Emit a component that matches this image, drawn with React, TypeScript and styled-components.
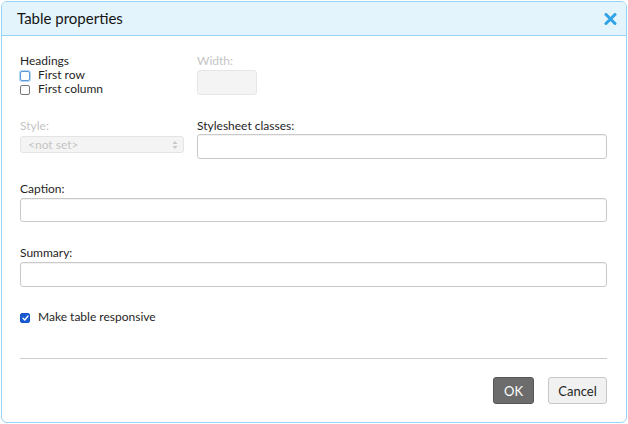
import styled, { createGlobalStyle } from 'styled-components';

const Global = createGlobalStyle`
  html, body {
    margin: 0;
    padding: 0;
    background: #ffffff;
  }
  body {
    font-family: Lato, "Open Sans", Arial, sans-serif;
    color: #1f1f1f;
  }
`;

const Dialog = styled.div`
  box-sizing: border-box;
  width: 626px;
  height: 422px;
  margin: 1px;
  border: 1px solid #96d3f4;
  border-radius: 6px;
  background: #fff;
  display: flex;
  flex-direction: column;
  overflow: hidden;
`;

const Header = styled.div`
  height: 34px;
  flex: none;
  display: flex;
  align-items: center;
  justify-content: space-between;
  padding: 0 8px 0 15px;
  background: #e3f4fd;
  border-bottom: 1px solid #96d3f4;
  box-sizing: border-box;
`;

const Title = styled.h1`
  margin: 0;
  font-size: 15px;
  font-weight: 400;
  color: #141414;
  padding-bottom: 1px;
`;

const CloseButton = styled.button`
  border: 0;
  background: none;
  padding: 0;
  width: 15px;
  height: 16px;
  display: flex;
  align-items: center;
  justify-content: center;
  cursor: pointer;
`;

const Body = styled.div`
  flex: 1;
  display: flex;
  flex-direction: column;
  padding: 17px 19px 0 18px;
`;

const Row = styled.div<{ $top?: number }>`
  display: grid;
  grid-template-columns: 164px 1fr;
  column-gap: 13px;
  margin-top: ${p => p.$top ?? 0}px;
`;

const Field = styled.div<{ $top?: number }>`
  display: flex;
  flex-direction: column;
  margin-top: ${p => p.$top ?? 0}px;
`;

const Label = styled.label<{ $disabled?: boolean; $gap?: number }>`
  font-size: 12px;
  line-height: 15px;
  color: ${p => (p.$disabled ? '#c4c4c4' : '#1f1f1f')};
  margin-bottom: ${p => p.$gap ?? 1}px;
`;

const Check = styled.label`
  display: flex;
  align-items: center;
  height: 14px;
  font-size: 12px;
  line-height: 14px;
  color: #1f1f1f;
`;

const Box = styled.span<{ $checked?: boolean; $focus?: boolean }>`
  box-sizing: border-box;
  flex: none;
  width: 10px;
  height: 10px;
  margin: 2px 8px 0 0;
  border-radius: 2px;
  border: 1px solid ${p => (p.$checked ? '#1553c7' : p.$focus ? '#5b9ad8' : '#777')};
  box-shadow: ${p => (p.$focus ? '0 0 0 1px #b7d6f3' : 'none')};
  background: ${p => (p.$checked ? '#1a5ad0' : '#fff')};
  display: flex;
  align-items: center;
  justify-content: center;
`;

const TextInput = styled.div<{ $w?: number; $h?: number; $disabled?: boolean }>`
  box-sizing: border-box;
  width: ${p => (p.$w ? `${p.$w}px` : '100%')};
  height: ${p => p.$h ?? 25}px;
  border: 1px solid ${p => (p.$disabled ? '#e6e6e6' : '#c9c9c9')};
  border-radius: 3px;
  background: ${p => (p.$disabled ? '#f4f4f4' : '#fff')};
  box-shadow: ${p => (p.$disabled ? 'none' : 'inset 0 1px 1px rgba(0,0,0,0.06)')};
`;

const Select = styled.div`
  box-sizing: border-box;
  width: 164px;
  height: 17px;
  margin-top: 2px;
  border: 1px solid #e4e4e4;
  border-radius: 3px;
  background: #f4f4f4;
  color: #c4c4c4;
  font-size: 12px;
  line-height: 15px;
  padding: 0 5px 0 7px;
  display: flex;
  align-items: center;
  justify-content: space-between;
`;

const Divider = styled.hr`
  border: 0;
  border-top: 1px solid #cccccc;
  margin: 34px 0 0;
`;

const Footer = styled.div`
  display: flex;
  justify-content: flex-end;
  gap: 14px;
  margin-top: 18px;
`;

const Button = styled.button<{ $primary?: boolean }>`
  box-sizing: border-box;
  height: 27px;
  min-width: ${p => (p.$primary ? 41 : 59)}px;
  padding: 0 9px;
  border-radius: 3px;
  font-family: inherit;
  font-size: 13px;
  border: 1px solid ${p => (p.$primary ? '#555' : '#c7c7c7')};
  background: ${p => (p.$primary ? '#6c6c6c' : '#f1f1f1')};
  color: ${p => (p.$primary ? '#fff' : '#1f1f1f')};
  cursor: pointer;
`;

const CheckMark = () => (
  <svg width="7" height="6" viewBox="0 0 7 6">
    <path d="M1 3.2 L2.8 5 L6 1" fill="none" stroke="#fff" strokeWidth="1.3" strokeLinecap="round" strokeLinejoin="round" />
  </svg>
);

const Arrows = () => (
  <svg width="6" height="10" viewBox="0 0 6 10">
    <path d="M0.5 4 L3 1 L5.5 4 Z M0.5 6 L3 9 L5.5 6 Z" fill="#c8c8c8" />
  </svg>
);

export default function App() {
  return (
    <>
      <Global />
      <Dialog>
        <Header>
          <Title>Table properties</Title>
          <CloseButton aria-label="Close">
            <svg width="13" height="12" viewBox="0 0 13 12">
              <path d="M2 1.5 L11 10.5 M11 1.5 L2 10.5" stroke="#2fa3e6" strokeWidth="3" strokeLinecap="round" />
            </svg>
          </CloseButton>
        </Header>

        <Body>
          <Row>
            <Field>
              <Label $gap={0}>Headings</Label>
              <Check>
                <Box $focus />
                First row
              </Check>
              <Check>
                <Box />
                First column
              </Check>
            </Field>
            <Field>
              <Label $disabled $gap={2}>Width:</Label>
              <TextInput $w={60} $disabled />
            </Field>
          </Row>

          <Row $top={22}>
            <Field>
              <Label $disabled>Style:</Label>
              <Select>
                <span>&lt;not set&gt;</span>
                <Arrows />
              </Select>
            </Field>
            <Field>
              <Label>Stylesheet classes:</Label>
              <TextInput />
            </Field>
          </Row>

          <Field $top={22}>
            <Label $gap={2}>Caption:</Label>
            <TextInput $h={24} />
          </Field>

          <Field $top={23}>
            <Label $gap={2}>Summary:</Label>
            <TextInput />
          </Field>

          <Field $top={23}>
            <Check>
              <Box $checked>
                <CheckMark />
              </Box>
              Make table responsive
            </Check>
          </Field>

          <Divider />

          <Footer>
            <Button $primary>OK</Button>
            <Button>Cancel</Button>
          </Footer>
        </Body>
      </Dialog>
    </>
  );
}
